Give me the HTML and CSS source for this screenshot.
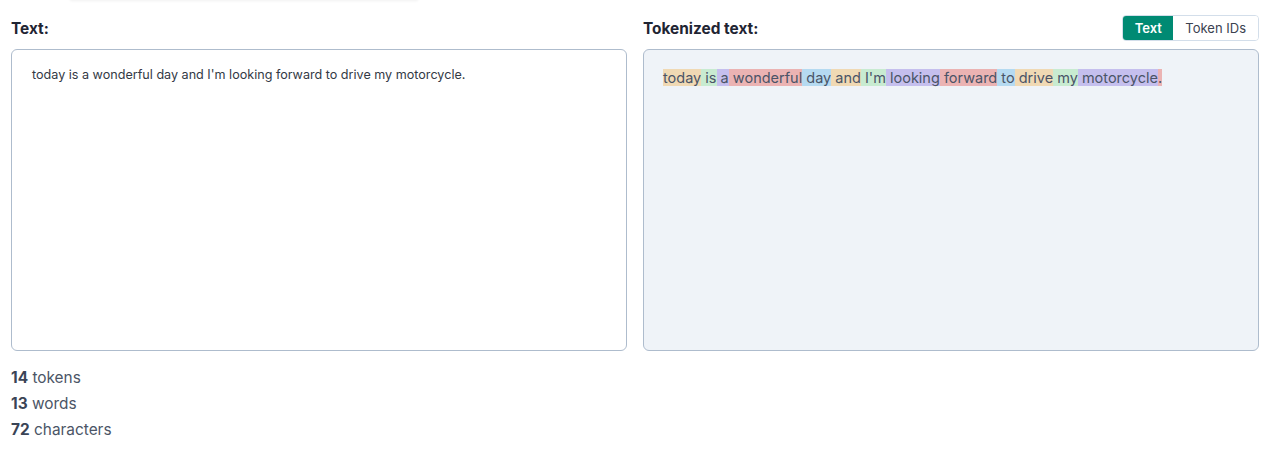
FILE: index.html
```html
<!DOCTYPE html>
<html lang="en">
<head>
<meta charset="utf-8">
<title>Tokenizer</title>
<link rel="stylesheet" href="styles.css">
</head>
<body>
<div class="topshade"></div>
<main class="page">
  <div class="panels">
    <section class="panel">
      <div class="panel-head">
        <h2 class="label">Text:</h2>
      </div>
      <div class="box box-input">today is a wonderful day and I'm looking forward to drive my motorcycle.</div>
    </section>
    <section class="panel">
      <div class="panel-head">
        <h2 class="label">Tokenized text:</h2>
        <div class="toggle">
          <button class="toggle-btn active">Text</button>
          <button class="toggle-btn">Token IDs</button>
        </div>
      </div>
      <div class="box box-output"><span class="tk c0">today</span><span class="tk c1"> is</span><span class="tk c2"> a</span><span class="tk c3"> wonderful</span><span class="tk c4"> day</span><span class="tk c0"> and</span><span class="tk c1"> I'm</span><span class="tk c2"> looking</span><span class="tk c3"> forward</span><span class="tk c4"> to</span><span class="tk c0"> drive</span><span class="tk c1"> my</span><span class="tk c2"> motorcycle</span><span class="tk c3">.</span></div>
    </section>
  </div>
  <div class="stats">
    <div class="stat"><b>14</b> tokens</div>
    <div class="stat"><b>13</b> words</div>
    <div class="stat"><b>72</b> characters</div>
  </div>
</main>
</body>
</html>
```
FILE: styles.css
```css
* { box-sizing: border-box; }
html, body { margin: 0; padding: 0; background: #ffffff; }
body {
  font-family: Inter, "Noto Sans", "Liberation Sans", sans-serif;
  color: #1f2937;
  position: relative;
}
.topshade {
  position: absolute;
  top: -6px;
  left: 70px;
  width: 348px;
  height: 6px;
  box-shadow: 0 1px 3px rgba(0,0,0,0.06);
}
.page {
  padding: 15px 13px 0 11px;
}
.panels {
  display: grid;
  grid-template-columns: 1fr 1fr;
  gap: 16px;
}
.panel { display: flex; flex-direction: column; }
.panel-head {
  height: 26px;
  display: flex;
  align-items: center;
  justify-content: space-between;
  margin-bottom: 8px;
}
.label {
  margin: 0;
  font-size: 15.4px;
  font-weight: 700;
  color: #1f2533;
}
.toggle {
  display: flex;
  height: 26px;
  border: 1px solid #d3deea;
  border-radius: 4px;
  overflow: hidden;
}
.toggle-btn {
  border: 0;
  margin: 0;
  font-family: inherit;
  font-size: 13px;
  background: #ffffff;
  color: #3b4250;
  padding: 0 12px;
  cursor: pointer;
}
.toggle-btn.active {
  background: #008a73;
  color: #ffffff;
  font-weight: 600;
  width: 50px;
  padding: 0;
}
.box {
  height: 302px;
  border: 1px solid #aebccd;
  border-radius: 6px;
}
.box-input {
  background: #ffffff;
  padding: 16px 20px;
  font-size: 12.6px;
  line-height: 18px;
  color: #333a46;
}
.box-output {
  background: #eff3f8;
  padding: 18px 19px;
  font-size: 14.5px;
  line-height: 19px;
  color: #4a5467;
  white-space: pre-wrap;
}
.tk.c0 { background: #f0d9b4; }
.tk.c1 { background: #c8ebd1; }
.tk.c2 { background: #c5bfee; }
.tk.c3 { background: #ebb3b3; }
.tk.c4 { background: #b5daf1; }
.stats {
  margin-top: 14px;
  font-size: 15.4px;
  line-height: 26px;
  color: #4b5566;
}
.stat b { font-weight: 700; color: #3a4456; }
```
